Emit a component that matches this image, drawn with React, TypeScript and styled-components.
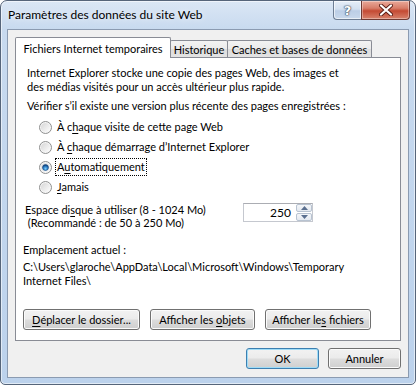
import styled, { createGlobalStyle } from 'styled-components';

const GlobalStyle = createGlobalStyle`
  html, body {
    margin: 0;
    background: #ffffff;
  }

  body {
    font-family: Lato, "Liberation Sans", sans-serif;
    font-size: 11px;
    color: #000000;
  }
`;

const WindowFrame = styled.div`
  box-sizing: border-box;
  width: 416px;
  height: 385px;
  display: flex;
  flex-direction: column;
  border: 1px solid #56657a;
  border-radius: 7px 7px 5px 5px;
  background: linear-gradient(180deg, #dbe7f5 0%, #c8daef 28px, #bcd2ec 100%);
  box-shadow: inset 0 0 0 1px rgba(255, 255, 255, 0.55);
  overflow: hidden;
`;

const TitleBar = styled.div`
  height: 28px;
  flex-shrink: 0;
  display: flex;
  align-items: flex-start;
`;

const TitleText = styled.div`
  padding-left: 7px;
  font-size: 12px;
  line-height: 28px;
  white-space: nowrap;
  text-shadow: 0 0 6px rgba(255, 255, 255, 0.9);
`;

const CaptionButtons = styled.div`
  margin-left: auto;
  margin-right: 5px;
  display: flex;
`;

const HelpButton = styled.div`
  box-sizing: border-box;
  width: 28px;
  height: 19px;
  display: flex;
  align-items: center;
  justify-content: center;
  border: 1px solid #6d7d93;
  border-top: none;
  border-right: none;
  border-radius: 0 0 0 4px;
  background: linear-gradient(180deg, #e6eef8 0%, #d3e0f0 45%, #bccee6 55%, #c9d9ec 100%);
  box-shadow: inset 0 0 0 1px rgba(255, 255, 255, 0.6);
  color: #ffffff;
  font-family: "DejaVu Sans", sans-serif;
  font-weight: bold;
  font-size: 13px;
  text-shadow: 0 0 1px #3b4a5e, 0 0 1px #3b4a5e, 0 0 2px #3b4a5e;
`;

const CloseButton = styled.div`
  box-sizing: border-box;
  width: 49px;
  height: 19px;
  display: flex;
  align-items: center;
  justify-content: center;
  border: 1px solid #6f3a33;
  border-top: none;
  border-radius: 0 0 4px 0;
  background: linear-gradient(180deg, #e9a99a 0%, #d77d69 40%, #c44a33 55%, #d7826c 100%);
  box-shadow: inset 0 0 0 1px rgba(255, 255, 255, 0.35);
`;

const Client = styled.div`
  box-sizing: border-box;
  flex: 1;
  margin: 0 6px 6px;
  display: flex;
  flex-direction: column;
  padding: 7px 7px 0 7px;
  border: 1px solid #8b9bb1;
  background: #f0f0f0;
`;

const TabRow = styled.div`
  display: flex;
  align-items: flex-end;
`;

const Tab = styled.div<{ $active?: boolean; $width: number }>`
  box-sizing: border-box;
  position: relative;
  z-index: ${({ $active }) => ($active ? 1 : 0)};
  width: ${({ $width }) => $width}px;
  height: ${({ $active }) => ($active ? 21 : 17)}px;
  margin-bottom: ${({ $active }) => ($active ? -1 : 0)}px;
  margin-left: ${({ $active }) => ($active ? 0 : -1)}px;
  display: flex;
  align-items: center;
  justify-content: center;
  border: 1px solid #898c95;
  border-bottom: none;
  border-radius: 2px 2px 0 0;
  background: ${({ $active }) =>
    $active ? '#ffffff' : 'linear-gradient(180deg, #f3f3f3 0%, #ebebeb 50%, #dddddd 51%, #e3e3e3 100%)'};
  white-space: nowrap;

  &:first-child {
    margin-left: 0;
  }
`;

const Panel = styled.div`
  box-sizing: border-box;
  width: 386px;
  height: 284px;
  display: flex;
  flex-direction: column;
  border: 1px solid #898c95;
  background: #ffffff;
`;

const Text = styled.p<{ $top: number; $left: number; $lh?: number }>`
  margin: ${({ $top }) => $top}px 0 0 ${({ $left }) => $left}px;
  line-height: ${({ $lh }) => $lh ?? 14}px;
  white-space: nowrap;
`;

const Mnemonic = styled.span`
  text-decoration: underline;
  text-underline-offset: 2px;
`;

const RadioList = styled.div`
  display: flex;
  flex-direction: column;
  margin: 4px 0 0 23px;
`;

const RadioRow = styled.div`
  height: 20px;
  display: flex;
  align-items: center;
  gap: 4px;
`;

const RadioLabel = styled.span<{ $focused?: boolean }>`
  padding: 1px 1px;
  line-height: 14px;
  outline: ${({ $focused }) => ($focused ? '1px dotted #000000' : 'none')};
`;

const DiskRow = styled.div`
  display: flex;
  align-items: flex-start;
  margin: 6px 0 0 9px;
`;

const DiskLabel = styled.div`
  width: 218px;
  line-height: 13px;
  white-space: nowrap;
`;

const SpinBox = styled.div`
  box-sizing: border-box;
  width: 70px;
  height: 19px;
  display: flex;
  border: 1px solid #c5c8cf;
  border-top-color: #abadb3;
  background: #ffffff;
`;

const SpinValue = styled.div`
  flex: 1;
  text-align: right;
  padding-right: 4px;
  font-size: 12px;
  line-height: 17px;
`;

const SpinButtons = styled.div`
  width: 16px;
  display: flex;
  flex-direction: column;
  gap: 1px;
  padding: 0 0 0 1px;
`;

const SpinButton = styled.div`
  flex: 1;
  display: flex;
  align-items: center;
  justify-content: center;
  border: 1px solid #b8c3d1;
  border-radius: 2px;
  background: linear-gradient(180deg, #f4f6f9 0%, #e4e9f0 100%);
`;

const ButtonRow = styled.div`
  display: flex;
  gap: 10px;
  margin: 21px 0 0 7px;
`;

const Footer = styled.div`
  display: flex;
  justify-content: flex-end;
  gap: 9px;
  margin-top: 7px;
`;

const Button = styled.div<{ $width: number; $default?: boolean }>`
  box-sizing: border-box;
  width: ${({ $width }) => $width}px;
  height: 21px;
  display: flex;
  align-items: center;
  justify-content: center;
  border: 1px solid ${({ $default }) => ($default ? '#3c7fb1' : '#707070')};
  border-radius: 3px;
  background: linear-gradient(180deg, #f2f2f2 0%, #ebebeb 49%, #dddddd 51%, #cfcfcf 100%);
  box-shadow: inset 0 0 0 1px ${({ $default }) => ($default ? '#9fdcf7' : '#fbfbfb')};
  white-space: nowrap;
`;

let radioSeq = 0;

const RadioIcon = ({ checked }: { checked?: boolean }) => {
  const id = `radio-${radioSeq++}`;
  return (
    <svg width="13" height="13" viewBox="0 0 13 13">
      <defs>
        <linearGradient id={`${id}-fill`} x1="0" y1="0" x2="1" y2="1">
          <stop offset="0" stopColor="#d6d6d6" />
          <stop offset="1" stopColor="#fdfdfd" />
        </linearGradient>
        <radialGradient id={`${id}-dot`} cx="0.5" cy="0.7" r="0.6">
          <stop offset="0" stopColor="#7fd0fa" />
          <stop offset="0.6" stopColor="#2a7bc4" />
          <stop offset="1" stopColor="#0f3f78" />
        </radialGradient>
      </defs>
      <circle cx="6.5" cy="6.5" r="6" fill="#f6f6f6" stroke="#8e8f8f" />
      <circle cx="6.5" cy="6.5" r="4.6" fill={`url(#${id}-fill)`} />
      {checked && <circle cx="6.5" cy="6.5" r="3" fill={`url(#${id}-dot)`} stroke="#1b4f86" strokeWidth="0.6" />}
    </svg>
  );
};

const Arrow = ({ up }: { up?: boolean }) => (
  <svg width="7" height="4" viewBox="0 0 7 4">
    <path d={up ? 'M0 4 L3.5 0 L7 4 Z' : 'M0 0 L3.5 4 L7 0 Z'} fill="#5a6f8f" />
  </svg>
);

const CloseGlyph = () => (
  <svg width="14" height="12" viewBox="0 0 14 12">
    <path d="M2 1.5 L12 10.5 M12 1.5 L2 10.5" stroke="#5a1e16" strokeWidth="4" strokeLinecap="round" />
    <path d="M2 1.5 L12 10.5 M12 1.5 L2 10.5" stroke="#ffffff" strokeWidth="2.2" strokeLinecap="round" />
  </svg>
);

export default function App() {
  radioSeq = 0;
  return (
    <>
      <GlobalStyle />
      <WindowFrame>
        <TitleBar>
          <TitleText>Paramètres des données du site Web</TitleText>
          <CaptionButtons>
            <HelpButton>?</HelpButton>
            <CloseButton>
              <CloseGlyph />
            </CloseButton>
          </CaptionButtons>
        </TitleBar>
        <Client>
          <TabRow>
            <Tab $active $width={156}>Fichiers Internet temporaires</Tab>
            <Tab $width={58}>Historique</Tab>
            <Tab $width={145}>Caches et bases de données</Tab>
          </TabRow>
          <Panel>
            <Text $top={8} $left={11}>
              Internet Explorer stocke une copie des pages Web, des images et
              <br />
              des médias visités pour un accès ultérieur plus rapide.
            </Text>
            <Text $top={5} $left={11}>
              Vérifier s’il existe une version plus récente des pages enregistrées :
            </Text>
            <RadioList>
              <RadioRow>
                <RadioIcon />
                <RadioLabel>
                  À c<Mnemonic>h</Mnemonic>aque visite de cette page Web
                </RadioLabel>
              </RadioRow>
              <RadioRow>
                <RadioIcon />
                <RadioLabel>
                  À <Mnemonic>c</Mnemonic>haque démarrage d’Internet Explorer
                </RadioLabel>
              </RadioRow>
              <RadioRow>
                <RadioIcon checked />
                <RadioLabel $focused>
                  A<Mnemonic>u</Mnemonic>tomatiquement
                </RadioLabel>
              </RadioRow>
              <RadioRow>
                <RadioIcon />
                <RadioLabel>
                  <Mnemonic>J</Mnemonic>amais
                </RadioLabel>
              </RadioRow>
            </RadioList>
            <DiskRow>
              <DiskLabel>
                Espace di<Mnemonic>s</Mnemonic>que à utiliser (8 - 1024 Mo)
                <br />
                &nbsp;(Recommandé : de 50 à 250 Mo)
              </DiskLabel>
              <SpinBox>
                <SpinValue>250</SpinValue>
                <SpinButtons>
                  <SpinButton>
                    <Arrow up />
                  </SpinButton>
                  <SpinButton>
                    <Arrow />
                  </SpinButton>
                </SpinButtons>
              </SpinBox>
            </DiskRow>
            <Text $top={14} $left={7}>
              Emplacement actuel :
            </Text>
            <Text $top={3} $left={7}>
              C:\Users\glaroche\AppData\Local\Microsoft\Windows\Temporary
              <br />
              Internet Files\
            </Text>
            <ButtonRow>
              <Button $width={117}>
                <span>
                  <Mnemonic>D</Mnemonic>éplacer le dossier...
                </span>
              </Button>
              <Button $width={105}>
                <span>
                  Afficher les <Mnemonic>o</Mnemonic>bjets
                </span>
              </Button>
              <Button $width={106}>
                <span>
                  Afficher le<Mnemonic>s</Mnemonic> fichiers
                </span>
              </Button>
            </ButtonRow>
          </Panel>
          <Footer>
            <Button $width={73} $default>
              OK
            </Button>
            <Button $width={73}>Annuler</Button>
          </Footer>
        </Client>
      </WindowFrame>
    </>
  );
}
